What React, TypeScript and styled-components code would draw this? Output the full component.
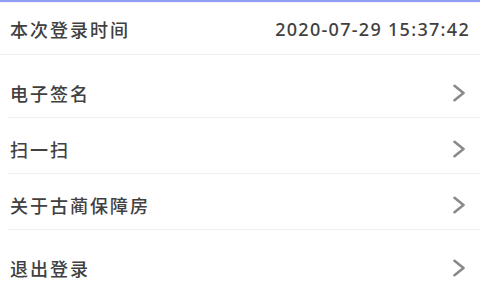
import React from "react";
import styled, { createGlobalStyle } from "styled-components";

const GlobalStyle = createGlobalStyle`
  html, body {
    margin: 0;
    padding: 0;
    background: #ffffff;
  }
  body {
    font-family: "Noto Sans CJK SC", "Noto Sans", sans-serif;
  }
`;

const Page = styled.div`
  width: 480px;
  height: 293px;
  overflow: hidden;
  background: #ffffff;
  display: flex;
  flex-direction: column;
`;

const TopBar = styled.div`
  height: 2px;
  background: #8d9ef4;
  border-bottom: 1px solid #f3f2fb;
`;

const Group = styled.div<{ $gap?: number }>`
  margin-top: ${(p) => p.$gap ?? 0}px;
  display: flex;
  flex-direction: column;
`;

const Row = styled.div<{ $height: number; $shift?: number; $line?: "full" | "inset" | "none" }>`
  height: ${(p) => p.$height}px;
  padding: ${(p) => p.$shift ?? 6}px 10px 0 10px;
  box-sizing: border-box;
  display: flex;
  align-items: center;
  justify-content: space-between;
  position: relative;

  &::after {
    content: "";
    display: ${(p) => (p.$line === "none" ? "none" : "block")};
    position: absolute;
    left: ${(p) => (p.$line === "full" ? 0 : 8)}px;
    right: 0;
    bottom: 0;
    height: 1px;
    background: #f1f1f1;
  }
`;

const Label = styled.span`
  font-family: "Noto Sans CJK SC", sans-serif;
  font-size: 18px;
  font-weight: 500;
  letter-spacing: 2px;
  color: #404040;
`;

const Value = styled.span`
  font-family: "Noto Sans", "Roboto", sans-serif;
  font-size: 18px;
  font-weight: 500;
  letter-spacing: 1.3px;
  color: #404040;
`;

const Chevron = styled.svg`
  width: 14px;
  height: 18px;
  margin-right: 4px;
  flex-shrink: 0;
`;

const Arrow = () => (
  <Chevron viewBox="0 0 14 18">
    <path
      d="M2.5 1.8 L11.5 9 L2.5 16.2"
      fill="none"
      stroke="#8a8a8a"
      strokeWidth="2.6"
      strokeLinecap="round"
      strokeLinejoin="round"
    />
  </Chevron>
);

const menu = ["电子签名", "扫一扫", "关于古蔺保障房"];

export default function App() {
  return (
    <>
      <GlobalStyle />
      <Page>
        <TopBar />
        <Row $height={55} $shift={0} $line="full">
          <Label>本次登录时间</Label>
          <Value>2020-07-29 15:37:42</Value>
        </Row>
        <Group $gap={7}>
          {menu.map((label) => (
            <Row key={label} $height={56} $line="inset">
              <Label>{label}</Label>
              <Arrow />
            </Row>
          ))}
        </Group>
        <Group $gap={7}>
          <Row $height={56} $line="none">
            <Label>退出登录</Label>
            <Arrow />
          </Row>
        </Group>
      </Page>
    </>
  );
}
